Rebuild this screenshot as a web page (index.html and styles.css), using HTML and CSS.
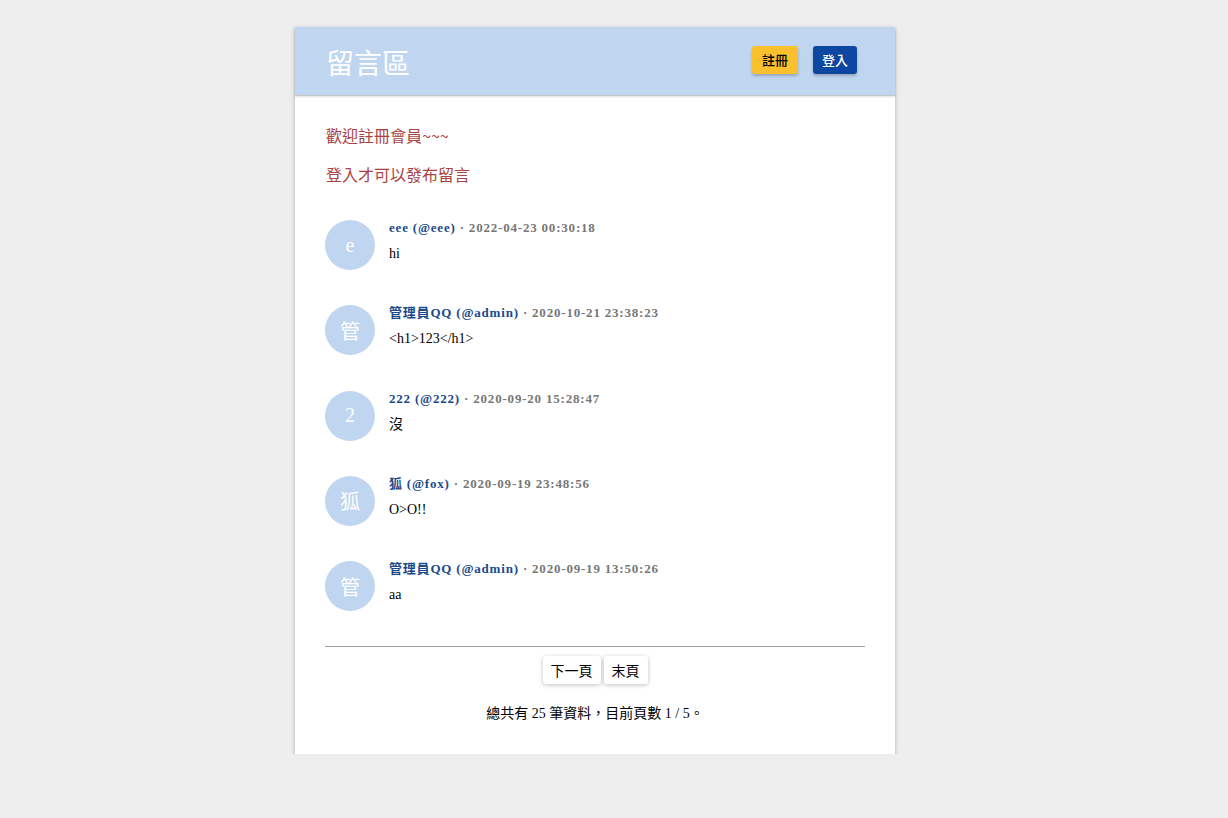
FILE: index.html
```html
<!DOCTYPE html>
<html lang="zh-Hant">
<head>
<meta charset="utf-8">
<title>留言區</title>
<link rel="stylesheet" href="styles.css">
</head>
<body>
<div class="card">
  <header class="header">
    <h1 class="title">留言區</h1>
    <div class="actions">
      <a class="btn btn-yellow">註冊</a>
      <a class="btn btn-blue">登入</a>
    </div>
  </header>
  <main class="body">
    <p class="notice">歡迎註冊會員~~~</p>
    <p class="notice">登入才可以發布留言</p>
    <div class="comments">
      <div class="comment">
        <div class="avatar">e</div>
        <div class="comment-main">
          <div class="meta"><span class="name">eee (@eee)</span><span class="date"> · 2022-04-23 00:30:18</span></div>
          <div class="content">hi</div>
        </div>
      </div>
      <div class="comment">
        <div class="avatar">管</div>
        <div class="comment-main">
          <div class="meta"><span class="name">管理員QQ (@admin)</span><span class="date"> · 2020-10-21 23:38:23</span></div>
          <div class="content">&lt;h1&gt;123&lt;/h1&gt;</div>
        </div>
      </div>
      <div class="comment">
        <div class="avatar">2</div>
        <div class="comment-main">
          <div class="meta"><span class="name">222 (@222)</span><span class="date"> · 2020-09-20 15:28:47</span></div>
          <div class="content">沒</div>
        </div>
      </div>
      <div class="comment">
        <div class="avatar">狐</div>
        <div class="comment-main">
          <div class="meta"><span class="name">狐 (@fox)</span><span class="date"> · 2020-09-19 23:48:56</span></div>
          <div class="content">O&gt;O!!</div>
        </div>
      </div>
      <div class="comment">
        <div class="avatar">管</div>
        <div class="comment-main">
          <div class="meta"><span class="name">管理員QQ (@admin)</span><span class="date"> · 2020-09-19 13:50:26</span></div>
          <div class="content">aa</div>
        </div>
      </div>
    </div>
    <hr class="divider">
    <div class="pager">
      <a class="page-btn">下一頁</a>
      <a class="page-btn">末頁</a>
    </div>
    <p class="summary">總共有 25 筆資料，目前頁數 1 / 5。</p>
  </main>
</div>
</body>
</html>
```

FILE: styles.css
```css
html, body {
  margin: 0;
  padding: 0;
}
body {
  background: #eeeeee;
  font-family: "Liberation Serif", "Noto Sans CJK TC", serif;
  font-size: 14px;
  color: #000;
  padding-right: 38px;
}
.card {
  width: 600px;
  margin: 27px auto 0;
  background: #fff;
  box-shadow: 0 2px 3px rgba(0,0,0,0.18), 0 1px 6px rgba(0,0,0,0.12);
}
.header {
  height: 68px;
  background: #bfd5f0;
  display: flex;
  align-items: center;
  justify-content: space-between;
  padding: 0 38px 0 31px;
  border-bottom: 1px solid #c6c6c6;
  box-shadow: 0 1px 2px rgba(0,0,0,0.12);
  position: relative;
}
.title {
  margin: 0;
  font-family: "Noto Sans CJK TC", sans-serif;
  font-weight: 400;
  font-size: 28px;
  color: #fff;
  line-height: 1;
  padding-top: 2px;
}
.actions {
  display: flex;
  gap: 15px;
  align-items: center;
  margin-top: -3px;
}
.btn {
  display: inline-flex;
  align-items: center;
  justify-content: center;
  height: 28px;
  padding: 0 9px;
  border-radius: 3px;
  font-family: "Noto Sans CJK TC", sans-serif;
  font-size: 13px;
  font-weight: 500;
  box-shadow: 0 2px 3px rgba(0,0,0,0.22);
}
.btn-yellow {
  background: #fbc02d;
  color: #000;
  padding: 0 10px;
}
.btn-blue {
  background: #0d47a1;
  color: #fff;
}
.body {
  padding: 12px 30px 31px 30px;
}
.notice {
  margin: 16px 0;
  font-family: "Noto Sans CJK TC", sans-serif;
  font-size: 16px;
  line-height: 23px;
  color: #a94442;
  padding-left: 1px;
}
.comments {
  padding-top: 18px;
}
.comment {
  display: flex;
  gap: 14px;
  margin-bottom: 35.25px;
}
.avatar {
  width: 50px;
  height: 50px;
  flex: none;
  border-radius: 50%;
  background: #bfd5f0;
  color: #fff;
  display: flex;
  align-items: center;
  justify-content: center;
  font-size: 20px;
}
.meta {
  font-size: 13px;
  font-weight: 700;
  line-height: 16px;
  letter-spacing: 0.8px;
}
.name {
  color: #1a4b8c;
}
.date {
  color: #777777;
}
.content {
  margin-top: 9px;
  font-size: 14px;
  line-height: 18px;
}
.divider {
  margin: 0;
  border: none;
  border-top: 1px solid #9e9e9e;
}
.pager {
  display: flex;
  justify-content: center;
  gap: 3px;
  margin-top: 9px;
}
.page-btn {
  display: inline-flex;
  align-items: center;
  justify-content: center;
  height: 28px;
  padding: 0 8px;
  background: #fff;
  border-radius: 3px;
  font-family: "Noto Sans CJK TC", sans-serif;
  font-size: 14px;
  color: #000;
  box-shadow: 0 1px 4px rgba(0,0,0,0.25);
}
.summary {
  margin: 21px 0 0;
  text-align: center;
  font-size: 14px;
  line-height: 18px;
}
```
